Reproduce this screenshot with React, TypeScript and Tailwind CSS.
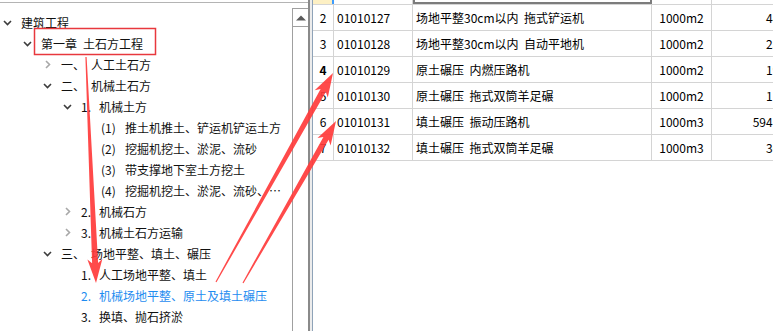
import React from 'react';

type TreeNode = {
  level: number;
  chev?: 'down' | 'right';
  prefix?: string;
  pw?: number;
  text: string;
  active?: boolean;
};

const tree: TreeNode[] = [
  { level: 0, chev: 'down', text: '建筑工程' },
  { level: 1, chev: 'down', prefix: '第一章', pw: 42, text: '土石方工程' },
  { level: 2, chev: 'right', prefix: '一、', pw: 30, text: '人工土石方' },
  { level: 2, chev: 'down', prefix: '二、', pw: 30, text: '机械土石方' },
  { level: 3, chev: 'down', prefix: '1.', pw: 18, text: '机械土方' },
  { level: 4, prefix: '(1)', pw: 24, text: '推土机推土、铲运机铲运土方' },
  { level: 4, prefix: '(2)', pw: 24, text: '挖掘机挖土、淤泥、流砂' },
  { level: 4, prefix: '(3)', pw: 24, text: '带支撑地下室土方挖土' },
  { level: 4, prefix: '(4)', pw: 24, text: '挖掘机挖土、淤泥、流砂、…' },
  { level: 3, chev: 'right', prefix: '2.', pw: 18, text: '机械石方' },
  { level: 3, chev: 'right', prefix: '3.', pw: 18, text: '机械土石方运输' },
  { level: 2, chev: 'down', prefix: '三、', pw: 30, text: '场地平整、填土、碾压' },
  { level: 3, prefix: '1.', pw: 18, text: '人工场地平整、填土' },
  { level: 3, prefix: '2.', pw: 18, text: '机械场地平整、原土及填土碾压', active: true },
  { level: 3, prefix: '3.', pw: 18, text: '换填、抛石挤淤' },
  { level: 1, chev: 'right', prefix: '第二章', pw: 42, text: '地基处理与边坡支护工程' },
];

const indent: Record<number, string> = {
  0: 'pl-0',
  1: 'pl-[20px]',
  2: 'pl-[40px]',
  3: 'pl-[60px]',
  4: 'pl-[80px]',
};

const prefixWidth: Record<number, string> = {
  42: 'w-[42px]',
  30: 'w-[30px]',
  24: 'w-[24px]',
  18: 'w-[18px]',
};

const rows = [
  { n: '2', code: '01010127', name: '场地平整30cm以内  拖式铲运机', unit: '1000m2', val: '44.52' },
  { n: '3', code: '01010128', name: '场地平整30cm以内  自动平地机', unit: '1000m2', val: '25.08' },
  { n: '4', code: '01010129', name: '原土碾压  内燃压路机', unit: '1000m2', val: '19.63', bold: true },
  { n: '5', code: '01010130', name: '原土碾压  拖式双筒羊足碾', unit: '1000m2', val: '1.958' },
  { n: '6', code: '01010131', name: '填土碾压  振动压路机', unit: '1000m3', val: '594.376' },
  { n: '7', code: '01010132', name: '填土碾压  拖式双筒羊足碾', unit: '1000m3', val: '36.41' },
];

function Chevron({ dir }: { dir: 'down' | 'right' }) {
  if (dir === 'down') {
    return (
      <svg width="9" height="6" viewBox="0 0 9 6" className="ml-[3px]">
        <polyline points="1,1 4.5,4.5 8,1" fill="none" stroke="#3c3c3c" strokeWidth="1.6" />
      </svg>
    );
  }
  return (
    <svg width="6" height="9" viewBox="0 0 6 9" className="ml-[5px]">
      <polyline points="1,1 4.5,4.5 1,8" fill="none" stroke="#a8a8a8" strokeWidth="1.6" />
    </svg>
  );
}

// tapered markup arrow, thin at the tail and widening toward a barbed head
function arrowPoints(x0: number, y0: number, x1: number, y1: number) {
  const tailW = 0.6;
  const shaftW = 3;
  const headW = 7.5;
  const headL = 20;
  const dx = x1 - x0;
  const dy = y1 - y0;
  const len = Math.hypot(dx, dy);
  const ux = dx / len;
  const uy = dy / len;
  const nx = -uy;
  const ny = ux;
  const bx = x1 - ux * headL;
  const by = y1 - uy * headL;
  const pts = [
    [x0 + nx * tailW, y0 + ny * tailW],
    [bx + nx * shaftW, by + ny * shaftW],
    [bx - ux * 4 + nx * headW, by - uy * 4 + ny * headW],
    [x1, y1],
    [bx - ux * 4 - nx * headW, by - uy * 4 - ny * headW],
    [bx - nx * shaftW, by - ny * shaftW],
    [x0 - nx * tailW, y0 - ny * tailW],
  ];
  return pts.map((p) => `${p[0].toFixed(1)},${p[1].toFixed(1)}`).join(' ');
}

function TreePanel() {
  return (
    <div className="w-[292px] h-full pt-[9px] overflow-hidden">
      {tree.map((node, i) => (
        <div
          key={i}
          className={`flex items-center h-[21px] whitespace-nowrap ${indent[node.level]}`}
        >
          <div className="w-[21px] shrink-0 flex items-center">
            {node.chev && <Chevron dir={node.chev} />}
          </div>
          <span className={node.active ? 'text-[#1e8cf0]' : 'text-[#111]'}>
            {node.prefix && (
              <span className={`inline-block ${prefixWidth[node.pw ?? 18]}`}>{node.prefix}</span>
            )}
            {node.text}
          </span>
        </div>
      ))}
    </div>
  );
}

function Scrollbar() {
  return (
    <div className="w-[16px] h-full pt-[5px]">
      <div className="h-full border-l border-t border-[#a0a0a0] bg-white">
        <div className="h-[18px] border-b border-[#a0a0a0] flex items-center justify-center">
          <svg width="10" height="6" viewBox="0 0 10 6">
            <polygon points="0,5.5 5,0.5 10,5.5" fill="#5a5a5a" />
          </svg>
        </div>
      </div>
    </div>
  );
}

function DataTable() {
  return (
    <div className="flex-1 h-full overflow-hidden bg-white">
      <div className="w-[486px]">
        {/* tail of the row above, still in edit mode */}
        <div className="flex h-[5px] border-b border-[#d4d4d4]">
          <div className="w-[21px] bg-[#fdf0c4] border-r-2 border-[#3d9bff]" />
          <div className="w-[79px] border-r border-[#d4d4d4]" />
          <div className="w-[239px] border-x-2 border-b-2 border-[#7c7c7c]" />
          <div className="w-[60px] border-r border-[#d4d4d4]" />
          <div className="w-[87px]" />
        </div>
        {rows.map((r) => (
          <div key={r.n} className="flex h-[26px] border-b border-[#d4d4d4] items-stretch text-[12px] text-black">
            <div className={`w-[21px] border-r border-[#d4d4d4] flex items-center justify-center ${r.bold ? 'font-bold' : ''}`}>
              {r.n}
            </div>
            <div className="w-[79px] border-r border-[#d4d4d4] flex items-center pl-[3px]">{r.code}</div>
            <div className="w-[239px] border-r border-[#d4d4d4] flex items-center pl-[3px] whitespace-pre">{r.name}</div>
            <div className="w-[60px] border-r border-[#d4d4d4] flex items-center justify-center">{r.unit}</div>
            <div className="w-[87px] flex items-center justify-end pr-[3px]">{r.val}</div>
          </div>
        ))}
      </div>
    </div>
  );
}

export default function App() {
  return (
    <div className="relative w-[773px] h-[331px] overflow-hidden bg-white flex font-['Noto_Sans_CJK_SC',sans-serif] text-[12px] leading-none">
      <div className="w-[308px] h-full flex flex-col">
        <div className="h-[2px] shrink-0" />
        <div className="flex-1 flex border-t border-[#b4b4b4] min-h-0">
          <TreePanel />
          <Scrollbar />
        </div>
      </div>
      <div className="w-[5px] h-full bg-[#ececec] border-l-2 border-r border-l-[#8a8a8a] border-r-[#8fa3b8]" />
      <DataTable />

      {/* annotations drawn over the screenshot */}
      <svg className="absolute inset-0 pointer-events-none" width="773" height="331">
        <rect x="34.5" y="28.5" width="121" height="26" fill="none" stroke="#e8383d" strokeWidth="1.5" />
        <polygon points={arrowPoints(86, 57, 96, 283)} fill="#ff3b3b" fillOpacity="0.92" />
        <polygon points={arrowPoints(216, 282, 333, 73)} fill="#ff3b3b" fillOpacity="0.92" />
        <polygon points={arrowPoints(243, 283, 336, 121)} fill="#ff3b3b" fillOpacity="0.92" />
      </svg>
    </div>
  );
}
